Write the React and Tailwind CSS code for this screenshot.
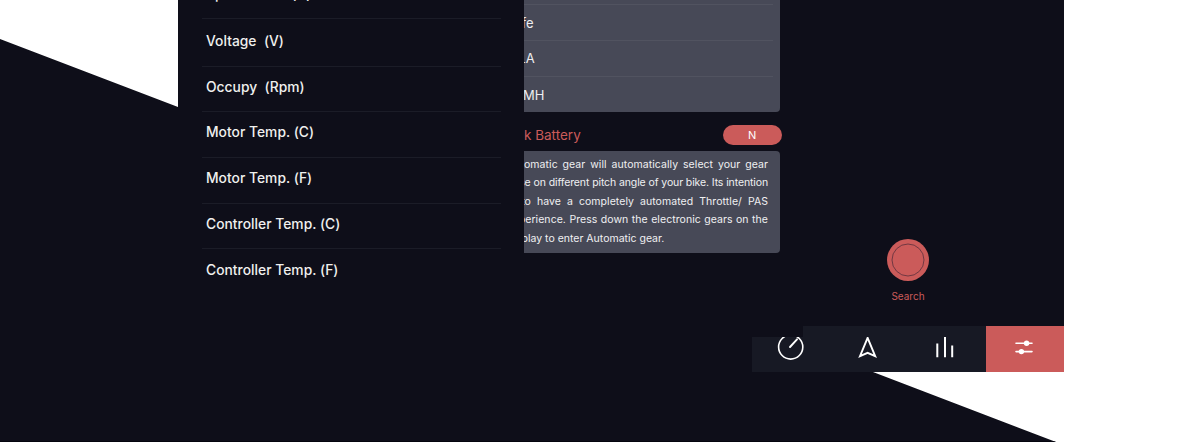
import React from "react";

const rows = [
  ["Voltage  (V)", "h-[48px] pb-[2px]"],
  ["Occupy  (Rpm)", "h-[45px] pb-[4px]"],
  ["Motor Temp. (C)", "h-[46px] pb-[4px]"],
  ["Motor Temp. (F)", "h-[46px] pb-[4px]"],
  ["Controller Temp. (C)", "h-[45px] pb-[4px]"],
];

function DataList() {
  return (
    <section className="w-[346px] h-[372px] bg-[#0e0e19] overflow-hidden pl-[24px] pr-[23px] text-[13.8px] font-medium tracking-[0.03px] text-[#f0f0ee] whitespace-pre">
      <div className="h-[19px] border-b border-[#1b1c27] pl-1 leading-[18px] flex items-start">
        <span className="-mt-[15px]">Speed Limit  (A)</span>
      </div>
      {rows.map(([label, size]) => (
        <div key={label} className={`${size} border-b border-[#1b1c27] pl-1 flex items-center`}>{label}</div>
      ))}
      <div className="h-[42px] pl-1 flex items-center">Controller Temp. (F)</div>
    </section>
  );
}

const lines = [
  ["Automatic gear will automatically select your gear", "tracking-[0.06px]"],
  ["base on different pitch angle of your bike. Its intention", "tracking-[-0.12px]"],
  ["is to have a completely automated Throttle/ PAS", "tracking-[0.06px]"],
  ["experience. Press down the electronic gears on the", "tracking-[0.06px]"],
];

function Battery() {
  return (
    <section className="w-[279px] h-[372px] bg-[#0e0e19] overflow-hidden whitespace-nowrap">
      <div className="w-[256px] h-[112px] bg-[#474957] rounded-br-[4px] overflow-hidden pr-[7px] text-[13px] text-[#eeeef1]">
        <div className="h-[5px] border-b border-[#515360]" />
        <div className="h-[36px] border-b border-[#515360] flex items-center pt-[2px]"><span className="-ml-[13px]">Life</span></div>
        <div className="h-[36px] border-b border-[#515360] flex items-center pt-px"><span className="-ml-[14px]">SLA</span></div>
        <div className="h-[36px] flex items-center pt-px"><span className="-ml-[14px]">NiMH</span></div>
      </div>
      <div className="h-[39px] w-[258px] pt-[13px] flex justify-between items-start text-[13.5px] leading-[20px] text-[#cb5b5a]">
        <span>k Battery</span>
        <span className="w-[59.5px] h-[19.5px] rounded-full bg-[#cb5b5a] text-white text-[11px] text-center">N</span>
      </div>
      <div className="w-[256px] h-[102px] bg-[#474957] rounded-r-[4px] overflow-hidden pt-[5px] text-[10.5px] leading-[18.4px] text-[#f0f0f2]">
        <div className="-ml-[17px] w-[261px]">
          {lines.map(([text, spacing]) => <p key={text} className={`[text-align-last:justify] ${spacing}`}>{text}</p>)}
          <p>display to enter Automatic gear.</p>
        </div>
      </div>
    </section>
  );
}

function Search() {
  return (
    <section className="w-[261px] h-[326px] bg-[#0e0e19] pt-[239px] pl-[84px]">
      <div className="w-[42px] flex flex-col items-center">
        <svg width="42" height="42" viewBox="0 0 42 42">
          <circle cx="21" cy="21" r="21" fill="#cb5b5a" />
          <circle cx="21" cy="21" r="16" fill="none" stroke="#713842" />
        </svg>
        <span className="mt-[7px] text-[10px] leading-[16px] text-[#cb5b5a]">Search</span>
      </div>
    </section>
  );
}

function NavBar() {
  return (
    <nav className="z-10 self-start mt-[326px] ml-[752px] w-[312px] h-[46px] flex">
      <div className="w-[51px] h-[35px] mt-[11px] bg-[#171924]" />
      <div className="w-[183px] bg-[#171924]" />
      <div className="w-[78px] bg-[#cb5b5a]" />
    </nav>
  );
}

function NavIcons() {
  return (
    <div className="z-20 self-start mt-[337px] ml-[752px] w-[312px] h-[35px] overflow-hidden">
      <svg className="-mt-[11px]" width="312" height="46" viewBox="0 0 312 46" fill="none" stroke="#fff" strokeWidth="1.6" strokeLinecap="round">
        <circle cx="38.7" cy="21" r="12.1" />
        <path d="M38 21l7-7.7" strokeWidth="1.9" />
        <path d="M115.6 11.8l-7.6 18.4 7.6-3.3 7.6 3.3z" strokeWidth="1.9" />
        <path d="M185.3 17.5v13.8M193 10.3v21M200.2 19.5v11.8" strokeWidth="2" strokeLinecap="butt" />
        <path d="M264 17.3h16M264 25.6h16" />
        <circle cx="274.6" cy="17.3" r="2.7" fill="#fff" stroke="none" />
        <circle cx="269.4" cy="25.6" r="2.7" fill="#fff" stroke="none" />
      </svg>
    </div>
  );
}

export default function App() {
  return (
    <main className="w-[1200px] h-[442px] grid bg-white overflow-hidden font-['Inter',sans-serif] *:[grid-area:1/1]">
      <div className="z-0 bg-[#0e0e19] border-b border-[#05050e] [clip-path:polygon(0_39px,178px_107px,700px_306px,873px_372px,1056px_442px,0_442px)]" />
      <div className="z-10 flex items-start pl-[178px] h-[326px]">
        <DataList />
        <Battery />
        <Search />
      </div>
      <NavBar />
      <NavIcons />
    </main>
  );
}
